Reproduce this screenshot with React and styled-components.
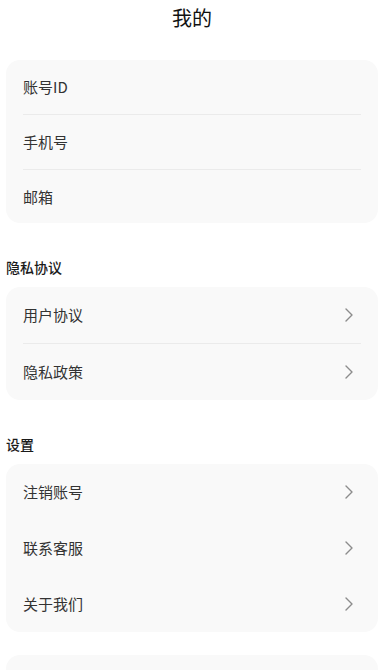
import styled, { createGlobalStyle } from 'styled-components'

const GlobalStyle = createGlobalStyle`
  * {
    box-sizing: border-box;
  }

  body {
    margin: 0;
    background: #ffffff;
    font-family: "Noto Sans CJK SC", "Noto Sans", sans-serif;
    color: #333333;
  }
`

const Page = styled.div`
  display: flex;
  flex-direction: column;
  padding: 0 6px 40px;
`

const Header = styled.div`
  height: 36px;
  line-height: 36px;
  text-align: center;
  font-size: 20px;
  color: #111111;
  margin-bottom: 24px;
`

const SectionTitle = styled.div`
  font-size: 14px;
  line-height: 20px;
  font-weight: 500;
  color: #1a1a1a;
  margin: 34px 0 10px;
`

const Card = styled.div`
  background: #f9f9f9;
  border-radius: 14px;
  padding: 0 17px;
  margin-top: ${(props) => props.$gap || 0}px;
  min-height: ${(props) => props.$minHeight || 0}px;
`

const Row = styled.div`
  display: flex;
  align-items: center;
  justify-content: space-between;
  height: ${(props) => props.$height}px;
  font-size: 15px;
  line-height: 20px;
  color: #333333;
  border-top: ${(props) => (props.$divider ? '1px solid #ebebeb' : 'none')};
`

const Chevron = styled.svg`
  width: 8px;
  height: 14px;
  margin-right: 8px;
  flex-shrink: 0;
`

const Arrow = () => (
  <Chevron viewBox="0 0 8 14">
    <polyline
      points="1,1 7,7 1,13"
      fill="none"
      stroke="#8c8c8c"
      strokeWidth="1.4"
      strokeLinecap="round"
      strokeLinejoin="round"
    />
  </Chevron>
)

const account = [
  { label: '账号ID', height: 54 },
  { label: '手机号', height: 55 },
  { label: '邮箱', height: 54 },
]
const privacy = [
  { label: '用户协议', height: 56 },
  { label: '隐私政策', height: 57 },
]
const settings = ['注销账号', '联系客服', '关于我们']

const App = () => {
  return (
    <Page>
      <GlobalStyle />
      <Header>我的</Header>

      <Card>
        {account.map((item, index) => (
          <Row key={item.label} $height={item.height} $divider={index > 0}>
            <span>{item.label}</span>
          </Row>
        ))}
      </Card>

      <SectionTitle>隐私协议</SectionTitle>
      <Card>
        {privacy.map((item, index) => (
          <Row key={item.label} $height={item.height} $divider={index > 0}>
            <span>{item.label}</span>
            <Arrow />
          </Row>
        ))}
      </Card>

      <SectionTitle>设置</SectionTitle>
      <Card>
        {settings.map((item) => (
          <Row key={item} $height={56}>
            <span>{item}</span>
            <Arrow />
          </Row>
        ))}
      </Card>

      <Card $gap={23} $minHeight={56} />
    </Page>
  )
}

export default App
